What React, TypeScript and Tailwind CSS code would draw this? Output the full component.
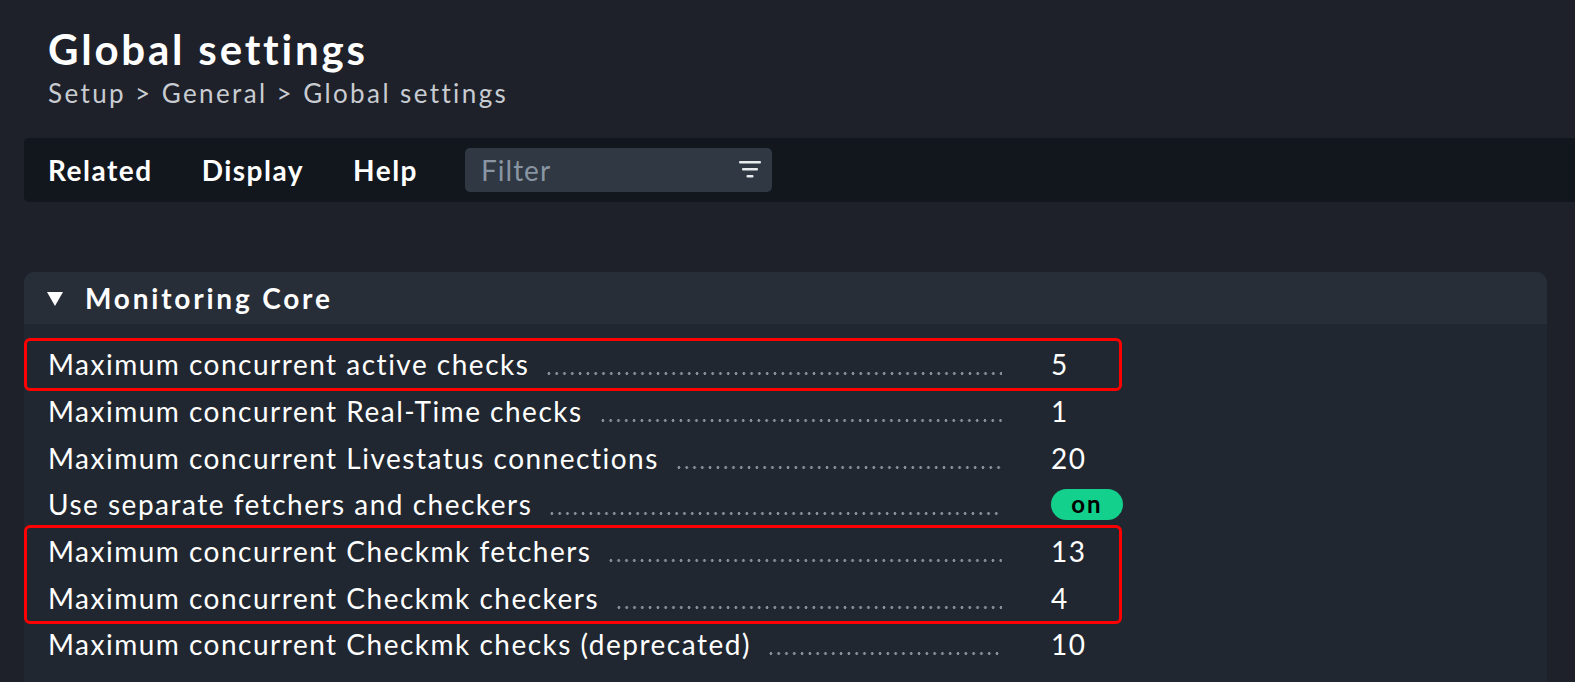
import React from "react";

// ─── Data ─────────────────────────────────────────────────────────────────────
type Setting = { label: string; value: string | boolean };

const ROWS_TOP: Setting[] = [{ label: "Maximum concurrent active checks", value: "5" }];
const ROWS_MID: Setting[] = [
  { label: "Maximum concurrent Real-Time checks", value: "1" },
  { label: "Maximum concurrent Livestatus connections", value: "20" },
  { label: "Use separate fetchers and checkers", value: true },
];
const ROWS_BOX: Setting[] = [
  { label: "Maximum concurrent Checkmk fetchers", value: "13" },
  { label: "Maximum concurrent Checkmk checkers", value: "4" },
];
const ROWS_END: Setting[] = [
  { label: "Maximum concurrent Checkmk checks (deprecated)", value: "10" },
];

function Row({ s, inset }: { s: Setting; inset?: boolean }) {
  return (
    <div className={`flex items-center h-[46.67px] ${inset ? "pl-[21px]" : "pl-6"}`}>
      <div className="flex w-[954px] items-baseline shrink-0">
        <span className="shrink-0 whitespace-nowrap">{s.label}</span>
        {/* dotted leader */}
        <span className="ml-[16px] flex-1 h-[3px] bg-[radial-gradient(circle,#8b9199_1.3px,transparent_1.6px)] bg-[length:7.8px_3px] bg-repeat-x" />
      </div>
      <div className="ml-[49px]">
        {typeof s.value === "boolean" ? (
          <span className="flex items-center justify-center w-[72px] h-[31px] rounded-full bg-[#13d18d] text-black font-bold text-[24px] tracking-[2px]">
            on
          </span>
        ) : (
          s.value
        )}
      </div>
    </div>
  );
}

function FilterIcon() {
  return (
    <svg width="24" height="18" viewBox="0 0 24 18" className="shrink-0">
      <rect x="1" y="0" width="22" height="2.5" rx="1" fill="#e8eaed" />
      <rect x="4" y="7" width="16" height="2.5" rx="1" fill="#e8eaed" />
      <rect x="8.5" y="14" width="7" height="2.5" rx="1" fill="#e8eaed" />
    </svg>
  );
}

export default function App() {
  return (
    <div className="h-[682px] overflow-hidden bg-[#1e2129] pl-6 text-white font-['Lato',sans-serif] tracking-[1.5px]">
      {/* Title */}
      <div className="pl-6 pt-6">
        <h1 className="text-[42px] leading-[50px] font-bold tracking-[2.8px]">Global settings</h1>
        <div className="mt-[4px] text-[26px] leading-[31px] tracking-[2.4px] text-[#c8ccd2]">
          Setup &gt; General &gt; Global settings
        </div>
      </div>

      {/* Toolbar */}
      <div className="mt-[29px] h-16 flex items-center bg-[#12171d] rounded-l-[5px] pl-6">
        <div className="flex items-center gap-[49px] text-[28px] font-bold">
          <span>Related</span>
          <span>Display</span>
          <span>Help</span>
        </div>
        <div className="ml-[47px] flex items-center w-[307px] h-[44px] rounded-[5px] bg-[#2f3843] pl-4 pr-[10px]">
          <span className="flex-1 text-[28px] tracking-[1px] text-[#8995a2]">Filter</span>
          <FilterIcon />
        </div>
      </div>

      {/* Section */}
      <div className="mt-[70px] mr-[28px] rounded-t-[10px] overflow-hidden bg-[#212730] text-[28px]">
        <div className="h-[52px] flex items-center bg-[#272e38] pl-[23px]">
          <svg width="16" height="14" viewBox="0 0 16 14" className="mt-[1px]">
            <polygon points="0,0 16,0 8,14" fill="#ffffff" />
          </svg>
          <span className="ml-[22px] font-bold tracking-[2.8px]">Monitoring Core</span>
        </div>
        <div className="pt-[17px] pb-6">
          <div className="w-[1098px] -my-[3px] border-[3px] border-[#ff0000] rounded-[6px]">
            {ROWS_TOP.map((s) => (
              <Row key={s.label} s={s} inset />
            ))}
          </div>
          {ROWS_MID.map((s) => (
            <Row key={s.label} s={s} />
          ))}
          <div className="w-[1098px] -my-[3px] border-[3px] border-[#ff0000] rounded-[6px]">
            {ROWS_BOX.map((s) => (
              <Row key={s.label} s={s} inset />
            ))}
          </div>
          {ROWS_END.map((s) => (
            <Row key={s.label} s={s} />
          ))}
        </div>
      </div>
    </div>
  );
}
